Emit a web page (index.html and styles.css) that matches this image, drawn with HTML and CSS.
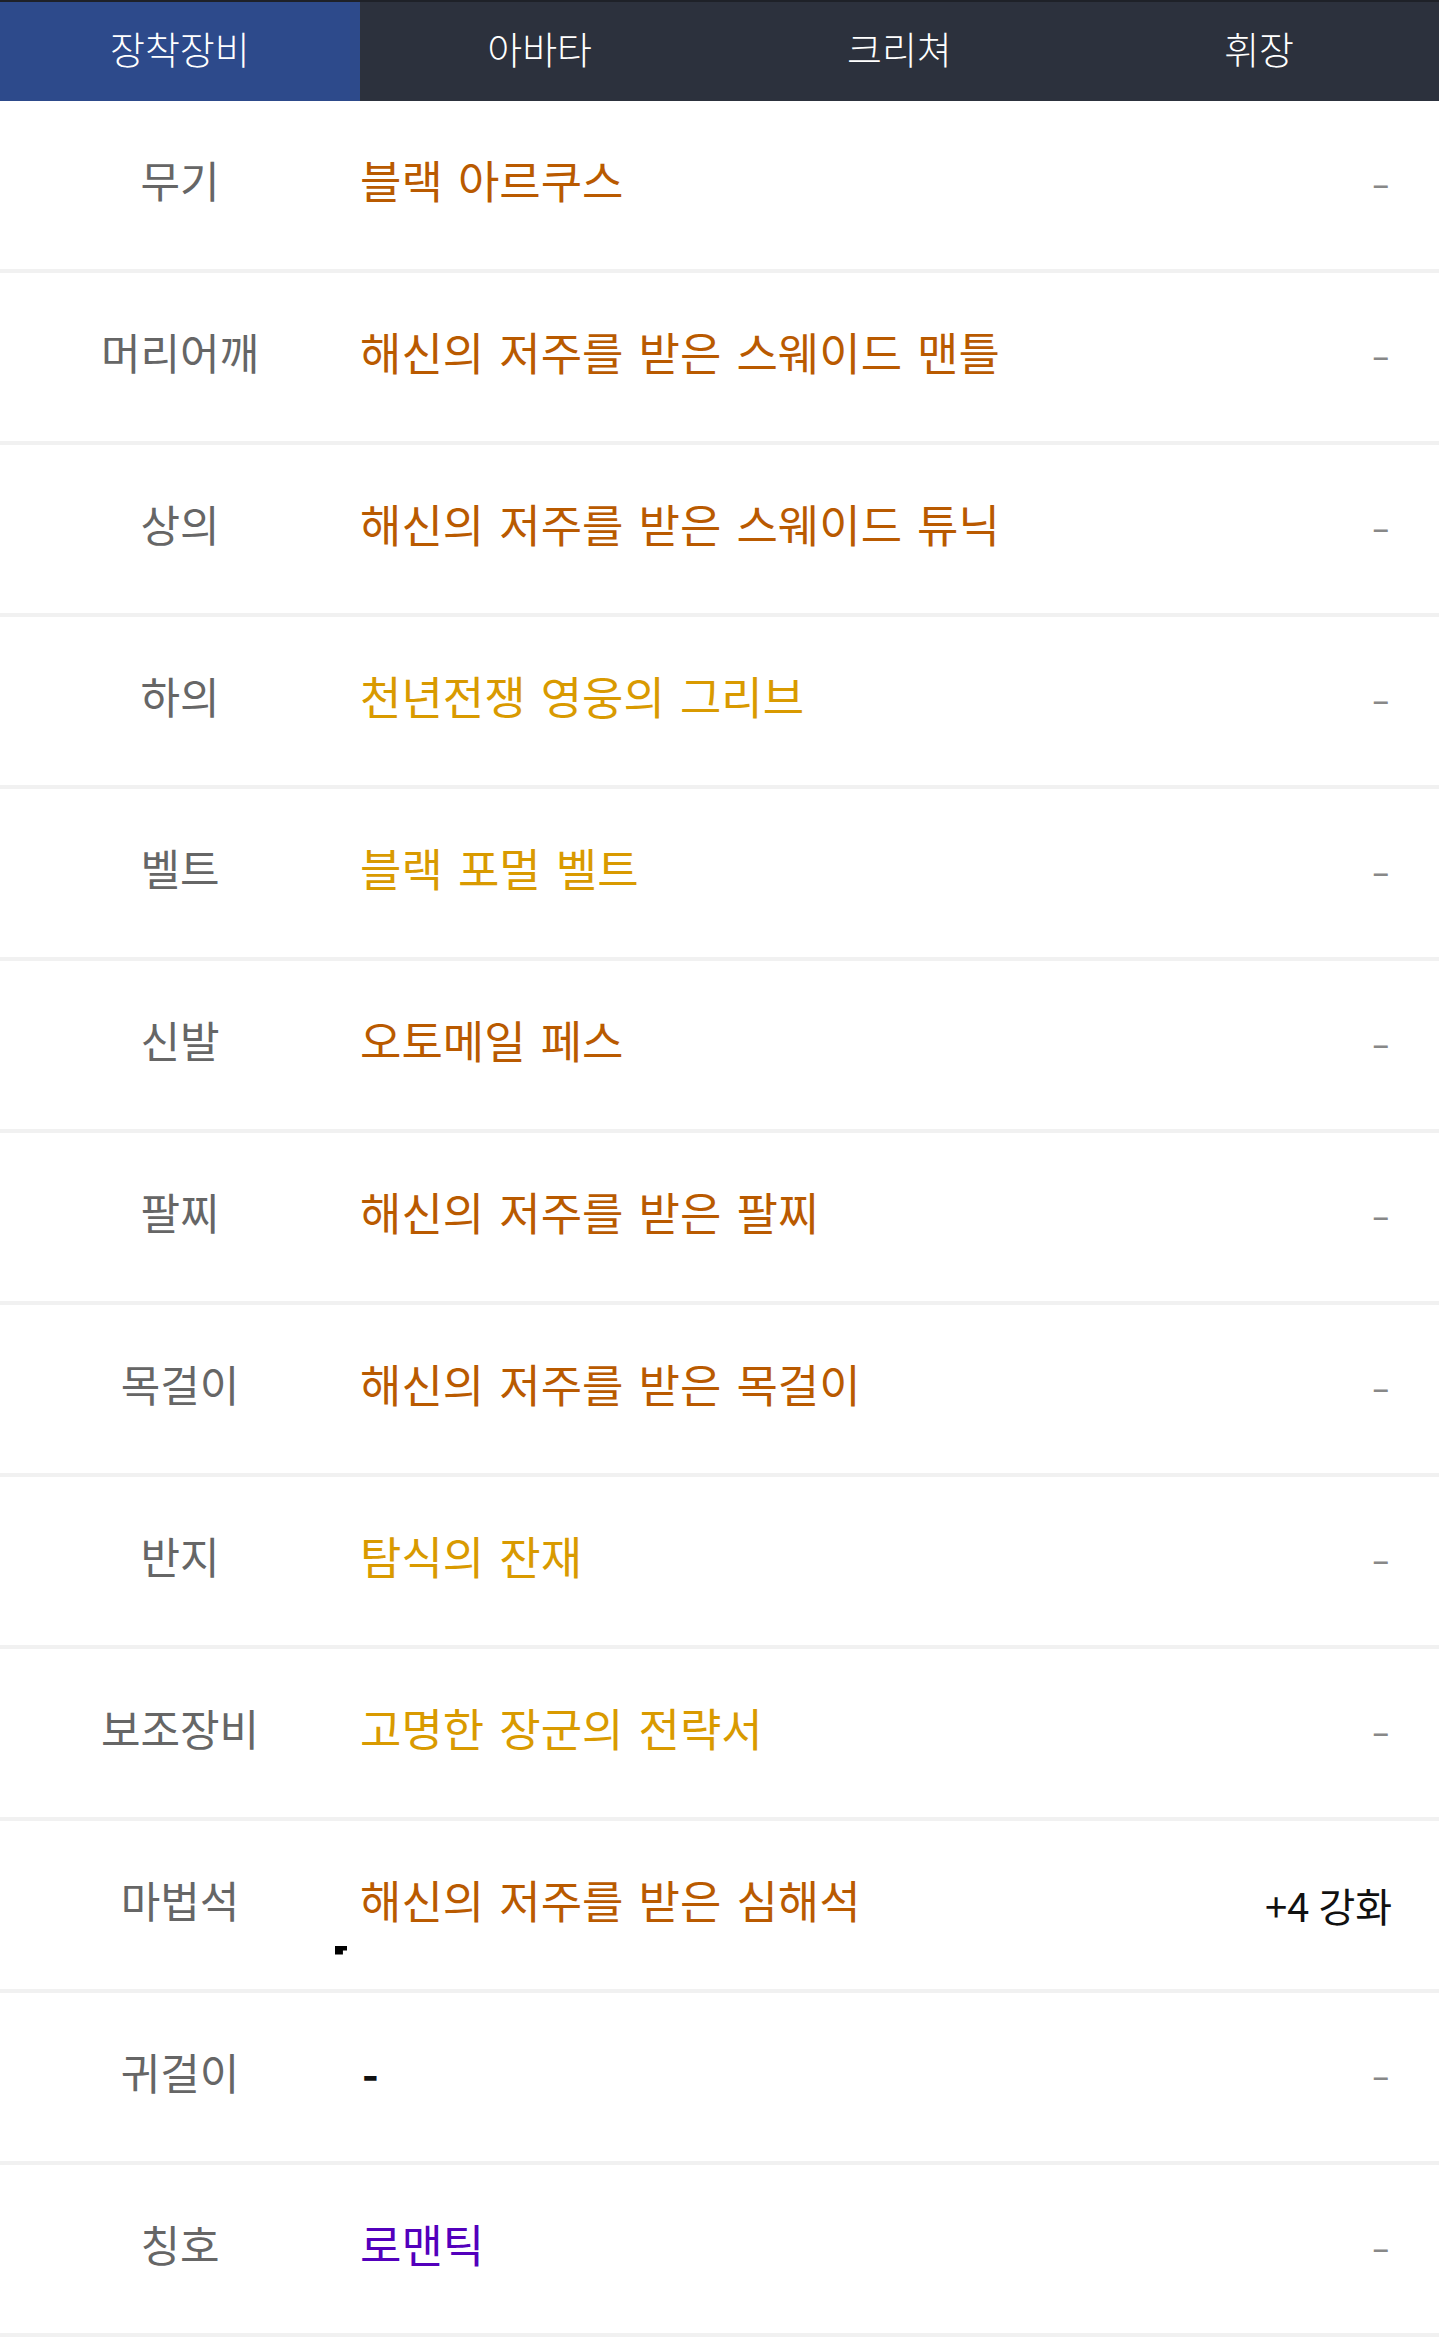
FILE: index.html
```html
<!DOCTYPE html>
<html>
<head>
<meta charset="utf-8">
<link rel="stylesheet" href="styles.css">
</head>
<body>

<div class="tabs">
 <div class="tab active">장착장비</div>
 <div class="tab">아바타</div>
 <div class="tab">크리쳐</div>
 <div class="tab">휘장</div>
</div>

<div class="equip">
 <div class="row"><div class="slot">무기</div><div class="item rare">블랙 아르쿠스</div><div class="extra">–</div></div>
 <div class="row"><div class="slot">머리어깨</div><div class="item rare">해신의 저주를 받은 스웨이드 맨틀</div><div class="extra">–</div></div>
 <div class="row"><div class="slot">상의</div><div class="item rare">해신의 저주를 받은 스웨이드 튜닉</div><div class="extra">–</div></div>
 <div class="row"><div class="slot">하의</div><div class="item unique">천년전쟁 영웅의 그리브</div><div class="extra">–</div></div>
 <div class="row"><div class="slot">벨트</div><div class="item unique">블랙 포멀 벨트</div><div class="extra">–</div></div>
 <div class="row"><div class="slot">신발</div><div class="item rare">오토메일 페스</div><div class="extra">–</div></div>
 <div class="row"><div class="slot">팔찌</div><div class="item rare">해신의 저주를 받은 팔찌</div><div class="extra">–</div></div>
 <div class="row"><div class="slot">목걸이</div><div class="item rare">해신의 저주를 받은 목걸이</div><div class="extra">–</div></div>
 <div class="row"><div class="slot">반지</div><div class="item unique">탐식의 잔재</div><div class="extra">–</div></div>
 <div class="row"><div class="slot">보조장비</div><div class="item unique">고명한 장군의 전략서</div><div class="extra">–</div></div>
 <div class="row"><div class="slot">마법석</div><div class="item rare">해신의 저주를 받은 심해석<span class="mark"></span></div><div class="extra reinforce">+4 강화</div></div>
 <div class="row"><div class="slot">귀걸이</div><div class="item none">-</div><div class="extra">–</div></div>
 <div class="row"><div class="slot">칭호</div><div class="item title">로맨틱</div><div class="extra">–</div></div>
</div>

</body>
</html>
```

FILE: styles.css
```css
body{
   margin:0;
   background:#fff;
   font-family:"Noto Sans CJK KR", "Noto Sans", sans-serif;
}

.tabs{
   display:flex;
   height:99px;
   border-top:2px solid #1e2128;
   background:#2c313d;
}

.tab{
   flex:1;
   display:flex;
   align-items:center;
   justify-content:center;
   padding-bottom:8px;
   color:#fff;
   font-size:38px;
   font-weight:300;
}

.tab.active{
   background:#2d4a8b;
}

.row{
   display:flex;
   align-items:center;
   box-sizing:border-box;
   height:172px;
   padding-bottom:12px;
   border-bottom:4px solid #f1f1f1;
}

.slot{
   width:360px;
   flex:none;
   text-align:center;
   color:#666;
   font-size:43px;
}

.item{
   position:relative;
   flex:1;
   font-size:45px;
   word-spacing:5px;
   white-space:nowrap;
}

.rare{ color:#b95a00; }
.unique{ color:#d99a00; }
.title{ color:#5300bc; }
.none{ color:#111; font-weight:700; padding-left:2px; }

.extra{
   padding-top:8px;
   padding-right:50px;
   color:#888;
   font-family:"Noto Sans", sans-serif;
   font-size:33px;
}

.extra.reinforce{
   padding-top:12px;
   padding-right:47px;
   color:#111;
   font-family:"Noto Sans CJK KR", sans-serif;
   font-size:40px;
}

/* stray marker under the stone name */
.mark{
   position:absolute;
   left:-25px;
   top:79px;
   width:12px;
   height:9px;
   background:#000;
   clip-path:polygon(0 0,100% 0,100% 55%,66% 55%,66% 100%,0 100%);
}
```
